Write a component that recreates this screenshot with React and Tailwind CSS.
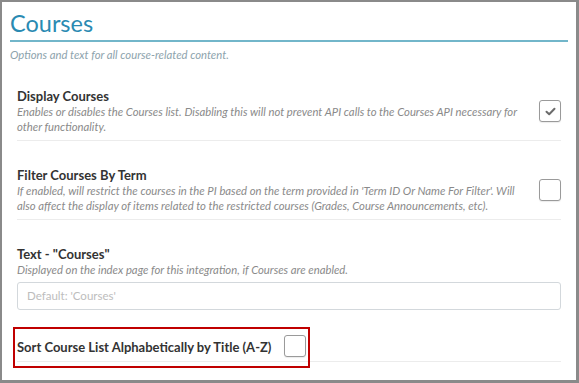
import React from "react";

function Check({ checked }) {
  return (
    <div className="w-[22px] h-[22px] shrink-0 rounded-[3px] border border-[#9a9a9a] bg-white shadow-[0_1px_1px_rgba(0,0,0,0.08)] flex items-center justify-center">
      {checked && (
        <svg width="11" height="9" viewBox="0 0 11 9">
          <path d="M1.5 4.8 L4.2 7.3 L9.5 1.8" fill="none" stroke="#6b6b6b" strokeWidth="2" strokeLinecap="round" strokeLinejoin="round" />
        </svg>
      )}
    </div>
  );
}

export default function App() {
  return (
    <div className="w-[579px] h-[383px] bg-white border-[#8a8a8a] border-t-2 border-l-2 border-r-[3px] border-b-[3px] relative overflow-hidden" style={{ fontFamily: "Lato, 'Open Sans', sans-serif" }}>
      <div className="pt-[5px]">
        <h1 className="pl-[8px] text-[23.5px] leading-[32px] text-[#2a8ab2] font-normal">Courses</h1>
        <div className="mx-[8px] mt-[1px] h-[2px] bg-[#72b6ca]"></div>
        <p className="pl-[8px] mt-[5px] text-[11.3px] leading-[16px] italic text-[#8da3ad]">Options and text for all course-related content.</p>
      </div>
      <div className="px-[15px]">
        <div className="pt-[25px] pb-[6px] border-b border-[#ececec] flex items-center justify-between">
          <div>
            <div className="text-[13px] leading-[16px] font-bold text-[#333]">Display Courses</div>
            <div className="text-[11.3px] leading-[15px] italic text-[#8a8a8a]">
              <div className="whitespace-nowrap">Enables or disables the Courses list. Disabling this will not prevent API calls to the Courses API necessary for</div>
              <div className="whitespace-nowrap">other functionality.</div>
            </div>
          </div>
          <Check checked />
        </div>
        <div className="pt-[26px] pb-[6px] border-b border-[#ececec] flex items-center justify-between">
          <div>
            <div className="text-[13px] leading-[16px] font-bold text-[#333]">Filter Courses By Term</div>
            <div className="text-[11.3px] leading-[15px] italic text-[#8a8a8a]">
              <div className="whitespace-nowrap">If enabled, will restrict the courses in the PI based on the term provided in 'Term ID Or Name For Filter'. Will</div>
              <div className="whitespace-nowrap">also affect the display of items related to the restricted courses (Grades, Course Announcements, etc).</div>
            </div>
          </div>
          <Check />
        </div>
        <div className="pt-[26px]">
          <div className="text-[13px] leading-[16px] font-bold text-[#333]">Text - "Courses"</div>
          <div className="text-[11.3px] leading-[15px] italic text-[#8a8a8a]">Displayed on the index page for this integration, if Courses are enabled.</div>
          <div className="mt-[5px] h-[28px] rounded-[3px] border border-[#d3d8dc] flex items-center pl-[9px] text-[11.5px] text-[#bdbdbd]">Default: 'Courses'</div>
        </div>
        <div className="pt-[25px] pb-[4px] border-b border-[#ececec] flex items-center gap-[13px]">
          <div className="text-[13px] leading-[16px] font-bold text-[#333] mt-[2px]">Sort Course List Alphabetically by Title (A-Z)</div>
          <Check />
        </div>
      </div>
      <div className="absolute left-[11px] top-[325px] w-[297px] h-[41px] border-2 border-[#c00000]"></div>
    </div>
  );
}
